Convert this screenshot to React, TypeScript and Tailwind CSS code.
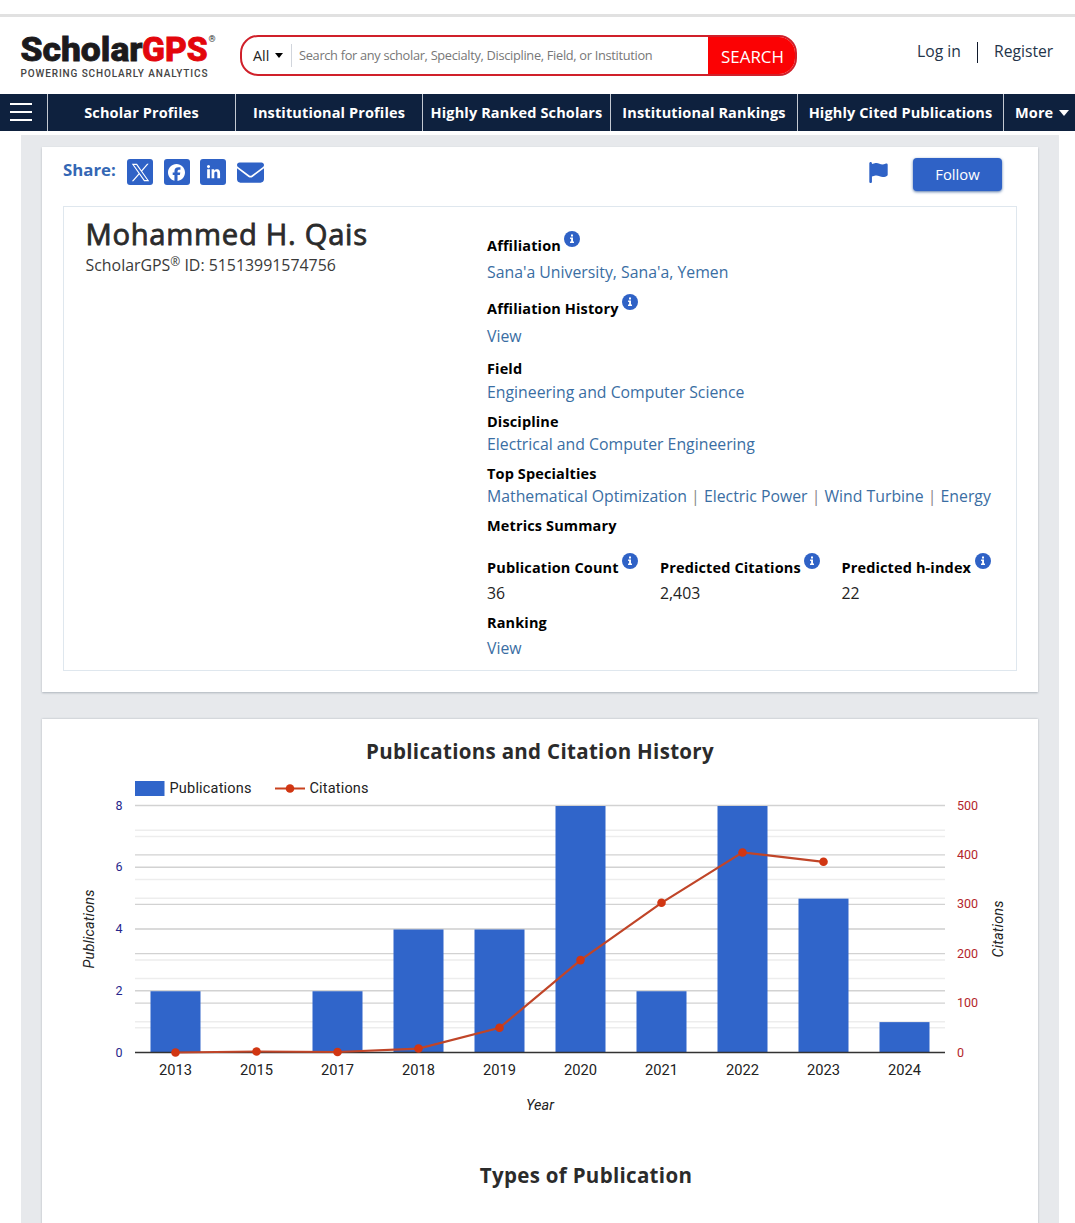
import React from "react";
import { FaEnvelope, FaFacebook, FaFlag, FaLinkedinIn } from "react-icons/fa6";

const NAV = [
  { label: "Scholar Profiles", cls: "w-[188px]" },
  { label: "Institutional Profiles", cls: "w-[187px]" },
  { label: "Highly Ranked Scholars", cls: "w-[188px]" },
  { label: "Institutional Rankings", cls: "w-[187px]" },
  { label: "Highly Cited Publications", cls: "w-[206px]" },
];

const DATA = [
  { year: "2013", pubs: 2, cites: 0 },
  { year: "2015", pubs: 0, cites: 2 },
  { year: "2017", pubs: 2, cites: 1 },
  { year: "2018", pubs: 4, cites: 8 },
  { year: "2019", pubs: 4, cites: 50 },
  { year: "2020", pubs: 8, cites: 187 },
  { year: "2021", pubs: 2, cites: 303 },
  { year: "2022", pubs: 8, cites: 405 },
  { year: "2023", pubs: 5, cites: 386 },
  { year: "2024", pubs: 1, cites: null },
];

function Logo() {
  return (
    <svg width="200" height="58" viewBox="0 -8 200 58" className="-mt-2 block overflow-visible">
      <g fontFamily="Roboto, sans-serif" fontWeight="800" fontSize="34" strokeWidth="0.9" strokeLinejoin="miter">
        <text x="-0.5" y="29" textLength="122" lengthAdjust="spacingAndGlyphs" fill="#1b1a1c" stroke="#1b1a1c">Scholar</text>
        <text x="121" y="29" textLength="65.5" lengthAdjust="spacingAndGlyphs" fill="#e3060c" stroke="#e3060c">GPS</text>
      </g>
      <text x="187.5" y="10" fontFamily="Roboto, sans-serif" fontWeight="700" fontSize="9" fill="#333">®</text>
      <text x="-0.5" y="45" fontFamily="Roboto, sans-serif" fontWeight="500" fontSize="10" textLength="187" fill="#444">
        POWERING SCHOLARLY ANALYTICS
      </text>
    </svg>
  );
}

function Info() {
  return (
    <svg width="16" height="16" viewBox="0 0 16 16" className="relative -top-[7px] ml-[3.5px] shrink-0">
      <circle cx="8" cy="8" r="8" fill="#2f62c6" />
      <path d="M7 3.4h2v2H7zM6.1 6.6H9v4h1v1.4H6v-1.4h1.1V8h-1z" fill="#fff" />
    </svg>
  );
}

function Label({ children, info, className = "" }: { children: React.ReactNode; info?: boolean; className?: string }) {
  return (
    <div className={`flex h-5 items-center whitespace-nowrap text-[14.5px] tracking-[0.13px] font-bold text-black ${className}`}>
      <span>{children}</span>
      {info && <Info />}
    </div>
  );
}

function Value({ children, className = "" }: { children: React.ReactNode; className?: string }) {
  return (
    <div className={`flex h-5 items-center whitespace-pre text-[15.82px] text-[#3a6ea3] ${className}`}>{children}</div>
  );
}

function Header() {
  return (
    <header className="flex h-20 pl-[21px]">
      <div className="w-[219px] pt-[18px]">
        <Logo />
      </div>
      <div className="mt-[21px] flex h-[41px] w-[557px] overflow-hidden rounded-[18px] border-2 border-[#d0202a]">
        <div className="my-[7px] flex w-[50px] items-center border-r border-gray-300 pl-[11px] text-[14.3px] text-[#222]">
          All
          <span className="ml-[6px] border-x-[4.5px] border-t-[5px] border-x-transparent border-t-black" />
        </div>
        <div className="flex flex-1 items-center whitespace-nowrap pl-[7px] pt-px text-[12.8px] tracking-[-0.31px] text-[#777]">
          Search for any scholar, Specialty, Discipline, Field, or Institution
        </div>
        <button className="-my-[2px] -mr-[2px] w-[89px] bg-[#fb0204] pt-[3px] text-[16.9px] text-white">SEARCH</button>
      </div>
      <div className="ml-[120px] mt-[27px] flex h-[22px] items-center whitespace-nowrap text-[15.7px] text-[#24344a]">
        <span className="w-[60px]">Log in</span>
        <span className="h-[21px] w-px bg-[#101a2c]" />
        <span className="ml-4">Register</span>
      </div>
    </header>
  );
}

function Nav() {
  return (
    <nav className="flex h-[37px] bg-[#0e213e] text-[14.5px] tracking-[0.13px] font-bold text-white">
      <div className="w-[47px] pl-[10px] pt-[9px]">
        <div className="h-[18px] w-[22px] border-y-2 border-white pt-[6px]">
          <div className="h-[2px] bg-white" />
        </div>
      </div>
      {NAV.map((n) => (
        <div key={n.label} className={`flex shrink-0 items-center justify-center whitespace-nowrap border-l border-[#c3c9d2] ${n.cls}`}>
          {n.label}
        </div>
      ))}
      <div className="flex flex-1 items-center border-l border-[#c3c9d2] pl-[11px]">
        More
        <span className="ml-[6px] border-x-[5px] border-t-[6px] border-x-transparent border-t-white" />
      </div>
    </nav>
  );
}

function ShareBar() {
  const box = "flex h-[26px] w-[26px] items-center justify-center rounded-[3px] bg-[#2f62c6] text-white";
  return (
    <div className="flex h-[59px] pl-[21px] pt-[11px]">
      <div className="w-[64px] whitespace-nowrap text-[16.8px] font-bold leading-[23px] text-[#3467b4]">Share:</div>
      <div className="flex h-[28px] items-center gap-[10.5px]">
        <span className={box}>
          <svg width="19" height="19" viewBox="0 0 24 24" fill="currentColor">
            <path d="M14.1 10.3 22.3 1h-2l-7.1 8.1L7.6 1H1l8.6 12.3L1 23h2l7.5-8.6 6 8.6H23zM3.7 2.5h3.1l13.5 19h-3.1z" />
          </svg>
        </span>
        <span className={box}>
          <FaFacebook size={17} />
        </span>
        <span className={box}>
          <FaLinkedinIn size={15} />
        </span>
        <FaEnvelope size={27} color="#2f62c6" />
      </div>
      <FaFlag size={21} color="#2f62c6" className="ml-[604.5px] mt-[4px]" />
      <button className="ml-[24px] h-[33px] w-[89px] rounded-[4px] bg-[#2f62c6] text-[14.8px] text-white shadow-[0_1px_3px_#5577aa]">
        Follow
      </button>
    </div>
  );
}

function Metric({ label, value, className }: { label: string; value: string; className: string }) {
  return (
    <div className={className}>
      <Label info>{label}</Label>
      <div className="mt-[5px] h-5 text-[15.8px] leading-5 text-[#222]">{value}</div>
    </div>
  );
}

function Profile() {
  const bar = <span className="text-[#888]">{" | "}</span>;
  return (
    <div className="mx-[21px] flex h-[465px] border border-[#dfe7ee]">
      <div className="w-[423px] pl-[21.5px] pt-[7px]">
        <h1 className="text-[29.2px] leading-[40px] tracking-[0.72px] text-[#2b2b2b] [-webkit-text-stroke:0.8px_#2b2b2b]">Mohammed H. Qais</h1>
        <div className="h-[22px] whitespace-nowrap text-[15.9px] leading-[22px] text-[#3a3a3a]">
          ScholarGPS<span className="relative -top-[5px] text-[12px]">®</span> ID: 51513991574756
        </div>
      </div>
      <div className="pt-[29px]">
        <Label info>Affiliation</Label>
        <Value className="mt-[7px]">Sana'a University, Sana'a, Yemen</Value>
        <Label info className="mt-[16px]">Affiliation History</Label>
        <Value className="mt-[8px]">View</Value>
        <Label className="mt-[12px]">Field</Label>
        <Value className="mt-[4px]">Engineering and Computer Science</Value>
        <Label className="mt-[9px]">Discipline</Label>
        <Value className="mt-[3px]">Electrical and Computer Engineering</Value>
        <Label className="mt-[9px]">Top Specialties</Label>
        <Value className="mt-[3px]">
          Mathematical Optimization{bar}Electric Power{bar}Wind Turbine{bar}Energy
        </Value>
        <Label className="mt-[9px]">Metrics Summary</Label>
        <div className="mt-[22px] flex">
          <Metric label="Publication Count" value="36" className="w-[173px]" />
          <Metric label="Predicted Citations" value="2,403" className="w-[181.5px]" />
          <Metric label="Predicted h-index" value="22" className="w-[160px]" />
        </div>
        <Label className="mt-[10px]">Ranking</Label>
        <Value className="mt-[6px]">View</Value>
      </div>
    </div>
  );
}

function Chart() {
  // Plot area in the chart's own coordinates.
  const left = 93;
  const right = 903;
  const top = 38.5;
  const bottom = 285.5;
  const h = bottom - top;
  const step = (right - left) / DATA.length;
  const cx = (i: number) => left + step * (i + 0.5);
  const py = (v: number) => bottom - (v / 8) * h;
  const cy = (v: number) => bottom - (v / 500) * h;
  const line = DATA.flatMap((d, i) => (d.cites === null ? [] : [`${cx(i)},${cy(d.cites)}`])).join(" ");
  return (
    <svg width="996" height="360" viewBox="0 0 996 360" className="block" fontFamily="Roboto, sans-serif">
      <rect x="93" y="14" width="29.5" height="15" fill="#3065ca" />
      <text x="127.5" y="25.5" fontSize="14.5" fill="#222" textLength="82">Publications</text>
      <path d="M233 21.5h30" stroke="#c9421f" strokeWidth="2" />
      <circle cx="248" cy="21.5" r="4.3" fill="#d13612" />
      <text x="267.5" y="25.5" fontSize="14.5" fill="#222" textLength="59">Citations</text>
      {[1, 3, 5, 7].map((v) => (
        <path key={v} d={`M${left} ${py(v)}H${right}`} stroke="#ededed" strokeWidth="1.5" />
      ))}
      {[50, 150, 250, 350, 450].map((v) => (
        <path key={v} d={`M${left} ${cy(v)}H${right}`} stroke="#ededed" strokeWidth="1.5" />
      ))}
      {[2, 4, 6, 8].map((v) => (
        <path key={v} d={`M${left} ${py(v)}H${right}`} stroke="#d2d2d2" strokeWidth="1.3" />
      ))}
      {[100, 200, 300, 400].map((v) => (
        <path key={v} d={`M${left} ${cy(v)}H${right}`} stroke="#d2d2d2" strokeWidth="1.3" />
      ))}
      {DATA.map((d, i) => (
        <rect key={d.year} x={cx(i) - 25} y={py(d.pubs) + 0.5} width="50" height={Math.max(0, bottom - py(d.pubs) - 0.5)} fill="#3065ca" />
      ))}
      <path d={`M${left} ${bottom}H${right}`} stroke="#333" strokeWidth="1.5" />
      <polyline points={line} fill="none" stroke="#c04528" strokeWidth="2.2" />
      {DATA.map((d, i) => d.cites !== null && <circle key={d.year} cx={cx(i)} cy={cy(d.cites)} r="4.3" fill="#d13612" />)}
      {DATA.map((d, i) => (
        <text key={d.year} x={cx(i)} y="307.5" fontSize="14.7" textAnchor="middle" fill="#222">{d.year}</text>
      ))}
      {[0, 2, 4, 6, 8].map((v) => (
        <text key={v} x="80.5" y={py(v) + 4} fontSize="12.5" textAnchor="end" fill="#26268c">{v}</text>
      ))}
      {[0, 100, 200, 300, 400, 500].map((v) => (
        <text key={v} x="915" y={cy(v) + 4} fontSize="12.5" fill="#b3262c">{v}</text>
      ))}
      <g fontSize="14.5" fontStyle="italic" textAnchor="middle" fill="#222">
        <text transform="translate(52 162) rotate(-90)" textLength="79">Publications</text>
        <text transform="translate(961 162) rotate(-90)" textLength="57">Citations</text>
        <text x="498" y="342.5">Year</text>
      </g>
    </svg>
  );
}

export default function App() {
  return (
    <div className="h-[1223px] w-[1075px] overflow-hidden bg-white font-['Open_Sans',sans-serif]">
      <div className="h-[14px]" />
      <div className="mb-[-3px] h-[3px] bg-[#e1e1e1]" />
      <Header />
      <Nav />
      <main className="ml-[21px] mr-[16px] mt-[4px] h-[1088px] bg-[#e7e9ec] px-[20px] pt-[12px] text-[#222]">
        <section className="mx-px h-[545px] bg-white shadow-[0_1px_2px_#aeb4bc]">
          <ShareBar />
          <Profile />
        </section>
        <section className="mx-px mt-[27px] h-[520px] bg-white shadow-[0_0_2px_#aeb4bc]">
          <h2 className="pt-[18px] text-center text-[20.5px] font-bold leading-[28px] tracking-[0.31px] text-[#2b2b2b]">
            Publications and Citation History
          </h2>
          <div className="mt-[2px]">
            <Chart />
          </div>
          <h2 className="mt-[34px] pl-[92px] text-center text-[20.5px] font-bold leading-[28px] tracking-[0.31px] text-[#2b2b2b]">
            Types of Publication
          </h2>
        </section>
      </main>
    </div>
  );
}
